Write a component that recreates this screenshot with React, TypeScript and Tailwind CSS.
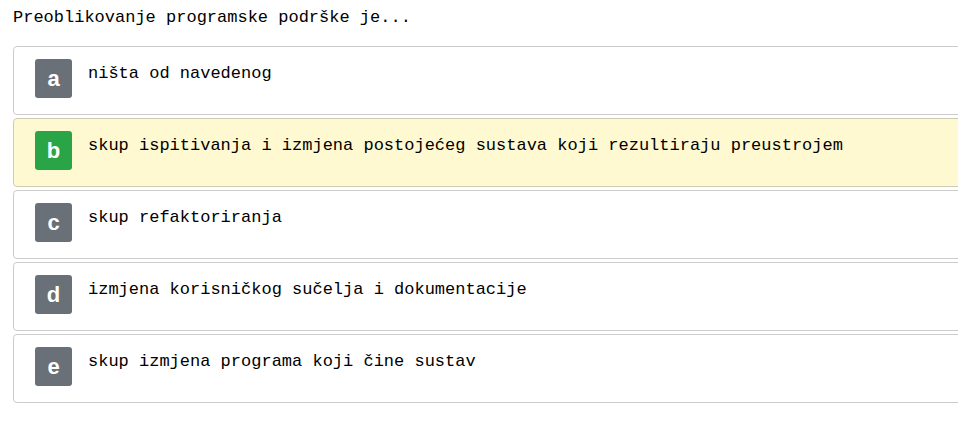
const question = "Preoblikovanje programske podrške je...";

const answers = [
  { key: "a", text: "ništa od navedenog" },
  { key: "b", text: "skup ispitivanja i izmjena postojećeg sustava koji rezultiraju preustrojem", correct: true },
  { key: "c", text: "skup refaktoriranja" },
  { key: "d", text: "izmjena korisničkog sučelja i dokumentacije" },
  { key: "e", text: "skup izmjena programa koji čine sustav" },
];

export default function App() {
  return (
    <div className="min-h-[426px] w-[958px] overflow-hidden bg-white pl-[13px] pt-[8px] text-black [font-family:'Courier_New','Liberation_Mono',monospace]">
      <p className="text-[17px] leading-[20px]">{question}</p>
      <ul className="mt-[18px] flex w-[962px] flex-col gap-[3px]">
        {answers.map((answer) => (
          <li
            key={answer.key}
            className={`flex h-[69px] items-start gap-4 rounded border pl-[21px] pt-[12px] ${
              answer.correct ? "border-[#cfccb4] bg-[#fef9d0]" : "border-[#cccccc] bg-white"
            }`}
          >
            <span
              className={`flex h-[39px] w-[37px] shrink-0 items-center justify-center rounded-[3px] pb-[1px] text-[22px] font-bold text-white [font-family:'Liberation_Sans',Arial,sans-serif] ${
                answer.correct ? "bg-[#29a547]" : "bg-[#6a7078]"
              }`}
            >
              {answer.key}
            </span>
            <span className="pt-[5px] text-[17px] leading-[20px]">{answer.text}</span>
          </li>
        ))}
      </ul>
    </div>
  );
}
